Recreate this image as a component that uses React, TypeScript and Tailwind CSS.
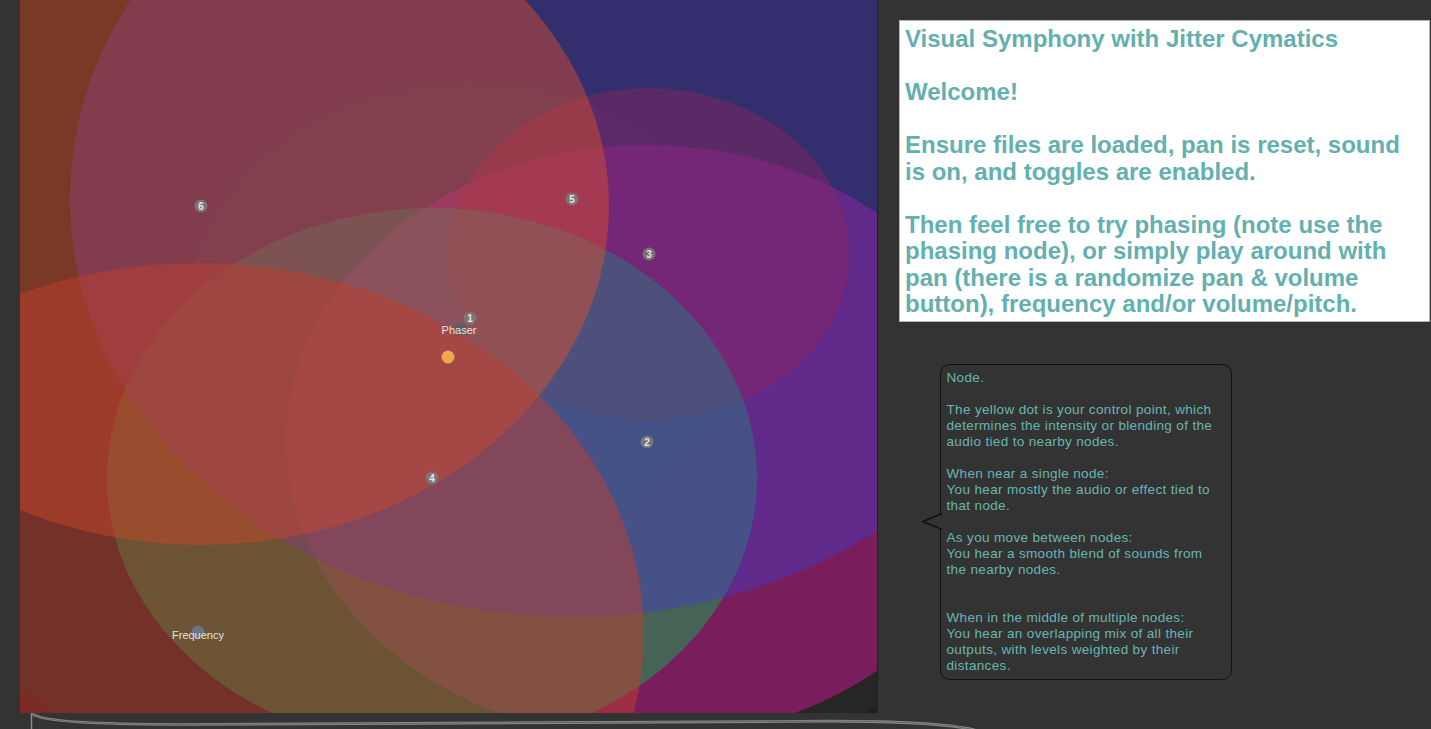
import React from "react";

type Field = {
  id: string;
  cx: number;
  cy: number;
  rx: number;
  ry: number;
  fill: string;
  alpha: number;
};

// Node influence areas, painted in this order. Colours are picked so that the
// dim "Phaser" wash laid over everything at the end lands on the screenshot.
const FIELDS: Field[] = [
  { id: "1", cx: 450, cy: 318, rx: 282, ry: 235, fill: "#8a7a7a", alpha: 0.04 },
  { id: "2", cx: 627, cy: 442, rx: 361, ry: 297, fill: "#ff06aa", alpha: 0.45 },
  { id: "3", cx: 629, cy: 254, rx: 200, ry: 166, fill: "#d00805", alpha: 0.5 },
  { id: "4", cx: 412, cy: 478, rx: 325, ry: 270, fill: "#00cf4e", alpha: 0.45 },
  { id: "5", cx: 552, cy: 199, rx: 502, ry: 418, fill: "#4732d9", alpha: 0.45 },
  { id: "6", cx: 181, cy: 206, rx: 408, ry: 339, fill: "#ff4f22", alpha: 0.45 },
  { id: "freq", cx: 178, cy: 634, rx: 446, ry: 371, fill: "#d73729", alpha: 0.5 },
  { id: "phaser", cx: 439, cy: 330, rx: 614, ry: 512, fill: "#355f53", alpha: 0.15 },
];

const MARKERS = [
  { label: "6", x: 181, y: 206 },
  { label: "5", x: 552, y: 199 },
  { label: "3", x: 629, y: 254 },
  { label: "1", x: 450, y: 318 },
  { label: "2", x: 627, y: 442 },
  { label: "4", x: 412, y: 478 },
];

const INFO_LINES = [
  "Visual Symphony with Jitter Cymatics",
  "",
  "Welcome!",
  "",
  "Ensure files are loaded, pan is reset, sound",
  "is on, and toggles are enabled.",
  "",
  "Then feel free to try phasing (note use the",
  "phasing node), or simply play around with",
  "pan (there is a randomize pan & volume",
  "button), frequency and/or volume/pitch.",
];

const BUBBLE_LINES = [
  "Node.",
  "",
  "The yellow dot is your control point, which",
  "determines the intensity or blending of the",
  "audio tied to nearby nodes.",
  "",
  "When near a single node:",
  "You hear mostly the audio or effect tied to",
  "that node.",
  "",
  "As you move between nodes:",
  "You hear a smooth blend of sounds from",
  "the nearby nodes.",
  "",
  "",
  "When in the middle of multiple nodes:",
  "You hear an overlapping mix of all their",
  "outputs, with levels weighted by their",
  "distances.",
];

function NodesCanvas() {
  return (
    <div className="w-[858px] h-[713px] border-r border-[#222222] bg-[#241d1f] overflow-hidden">
      <svg width={857} height={713} viewBox="0 0 857 713" className="block">
        <rect width={857} height={713} fill="#241d1f" />
        {FIELDS.map((f) => (
          <ellipse
            key={f.id}
            cx={f.cx}
            cy={f.cy}
            rx={f.rx}
            ry={f.ry}
            fill={f.fill}
            fillOpacity={f.alpha}
          />
        ))}

        {MARKERS.map((m) => (
          <g key={m.label}>
            <circle cx={m.x} cy={m.y} r={6.5} fill="#7a7a7a" fillOpacity={0.9} />
            <text
              x={m.x}
              y={m.y + 0.5}
              textAnchor="middle"
              dominantBaseline="central"
              fontSize={10}
              fontWeight={700}
              fill="#e8e8e8"
            >
              {m.label}
            </text>
          </g>
        ))}

        <circle cx={440} cy={329} r={6.5} fill="#55605f" fillOpacity={0.85} />
        <text
          x={439}
          y={330}
          textAnchor="middle"
          dominantBaseline="central"
          fontSize={11}
          fill="#e4e4e4"
        >
          Phaser
        </text>

        <circle cx={178} cy={632} r={6.5} fill="#6a7d96" fillOpacity={0.8} />
        <text
          x={178}
          y={635}
          textAnchor="middle"
          dominantBaseline="central"
          fontSize={11}
          fill="#e4e4e4"
        >
          Frequency
        </text>

        <circle cx={428} cy={357} r={6.5} fill="#efa94b" />
      </svg>
    </div>
  );
}

function InfoBox() {
  return (
    <div className="w-[531px] h-[302px] bg-white border border-[#b4b4b4] pl-[5px] pt-[5px]">
      <div className="whitespace-pre text-[24px] leading-[26.5px] font-bold text-[#62b0b0]">
        {INFO_LINES.map((line, i) => (
          <div key={i}>{line === "" ? "\u00a0" : line}</div>
        ))}
      </div>
    </div>
  );
}

function NodeBubble() {
  return (
    <div className="relative w-[292px] h-[316px] rounded-[10px] border-[1.5px] border-[#111111] bg-[#333333] pl-[5.5px] pt-[5px]">
      <svg
        width={22}
        height={18}
        viewBox="0 0 22 18"
        className="absolute left-[-19px] top-[148px]"
      >
        <polygon points="22,0.5 1,8.5 22,16.5" fill="#333333" />
        <polyline
          points="19.8,0.6 1,8.5 19.8,16.4"
          fill="none"
          stroke="#111111"
          strokeWidth={1.5}
          strokeLinejoin="miter"
        />
      </svg>
      <div className="whitespace-pre text-[13.5px] leading-[16px] tracking-[0.35px] text-[#68b6b3]">
        {BUBBLE_LINES.map((line, i) => (
          <div key={i}>{line === "" ? "\u00a0" : line}</div>
        ))}
      </div>
    </div>
  );
}

export default function App() {
  return (
    <div
      className="w-[1431px] h-[729px] bg-[#333333] overflow-hidden flex flex-col"
      style={{ fontFamily: '"Liberation Sans", Arial, sans-serif' }}
    >
      <div className="flex h-[713px] shrink-0">
        <div className="w-[20px] shrink-0" />
        <NodesCanvas />
        <div className="flex flex-col pl-[21px] pt-[20px]">
          <InfoBox />
          <div className="ml-[41px] mt-[42px]">
            <NodeBubble />
          </div>
        </div>
      </div>
      <svg width={1431} height={16} viewBox="0 0 1431 16" className="block">
        <path d="M31.5 0 L31.5 16" stroke="#8a8a8a" strokeWidth={1.5} fill="none" />
        <path
          d="M32 1 C45 9 95 11 180 11.5 L780 8.5 C880 7 945 10 975 17"
          stroke="#8c8c8c"
          strokeWidth={2.6}
          fill="none"
        />
        <path
          d="M32 1 C45 9 95 11 180 11.5 L780 8.5 C880 7 945 10 975 17"
          stroke="#5c5c5c"
          strokeWidth={0.8}
          fill="none"
        />
      </svg>
    </div>
  );
}
